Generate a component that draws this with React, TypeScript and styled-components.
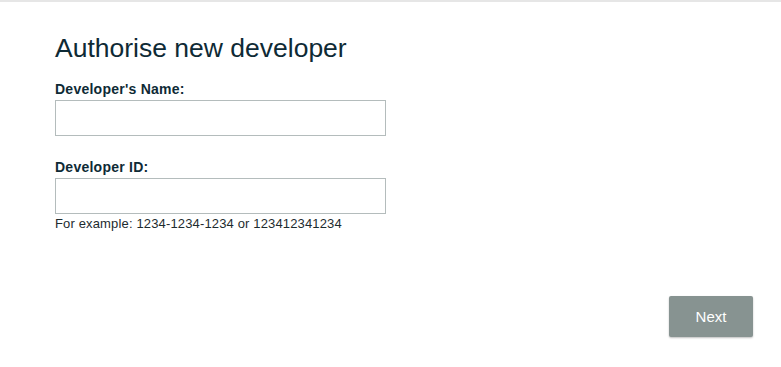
import React from 'react'
import styled, { createGlobalStyle } from 'styled-components'

const GlobalStyle = createGlobalStyle`
  html, body {
    margin: 0;
    padding: 0;
    background: #ffffff;
    font-family: "Liberation Sans", Arial, sans-serif;
  }
`

const Page = styled.div`
  border-top: 2px solid #e6e6e6;
  height: 365px;
  display: flex;
  flex-direction: column;
  padding: 0 28px 0 55px;
`

const Title = styled.h1`
  margin: 31px 0 0;
  font-size: 26.5px;
  font-weight: 400;
  color: #0e2a35;
  line-height: 30px;
`

const Form = styled.div`
  display: flex;
  flex-direction: column;
  margin-top: 18px;
`

const Field = styled.div<{ $gap?: number }>`
  display: flex;
  flex-direction: column;
  margin-bottom: ${({ $gap }) => $gap ?? 0}px;
`

const Label = styled.label`
  font-size: 14px;
  font-weight: 700;
  letter-spacing: 0.25px;
  color: #0e2a35;
  line-height: 16px;
  margin-bottom: 3px;
`

const Input = styled.input`
  box-sizing: border-box;
  width: 331px;
  height: 36px;
  border: 1px solid #b4bcbc;
  background: #fff;
  outline: none;
`

const Hint = styled.div`
  font-size: 13px;
  letter-spacing: 0.15px;
  color: #1d2b2f;
  margin-top: 2px;
  line-height: 15px;
`

const Footer = styled.div`
  display: flex;
  justify-content: flex-end;
  margin-top: 65px;
`

const Button = styled.button`
  width: 84px;
  height: 41px;
  border: none;
  border-radius: 2px;
  background: #879391;
  color: #ffffff;
  font-family: "Liberation Sans", Arial, sans-serif;
  font-size: 15px;
  box-shadow: 0 1px 2px rgba(0, 0, 0, 0.25);
`

export default function App() {
  return (
    <>
      <GlobalStyle />
      <Page>
        <Title>Authorise new developer</Title>
        <Form>
          <Field $gap={23}>
            <Label>Developer's Name:</Label>
            <Input type="text" />
          </Field>
          <Field>
            <Label>Developer ID:</Label>
            <Input type="text" />
            <Hint>For example: 1234-1234-1234 or 123412341234</Hint>
          </Field>
        </Form>
        <Footer>
          <Button>Next</Button>
        </Footer>
      </Page>
    </>
  )
}
